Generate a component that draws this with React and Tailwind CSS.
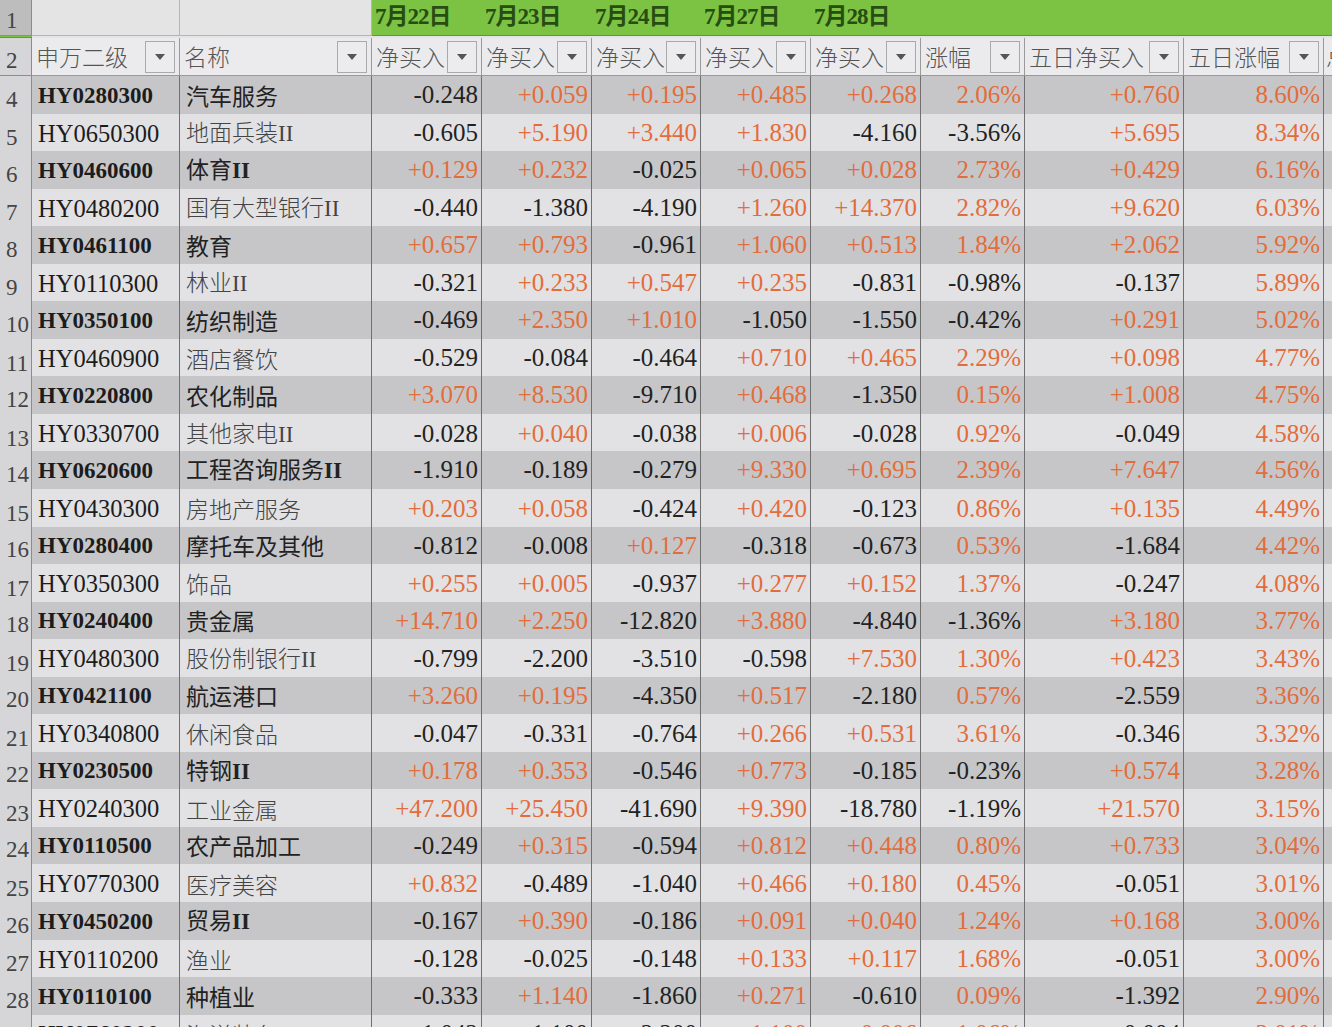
import React from 'react';

const rows = [
  ['HY0280300', '汽车服务', '-0.248', '+0.059', '+0.195', '+0.485', '+0.268', '2.06%', '+0.760', '8.60%'],
  ['HY0650300', '地面兵装II', '-0.605', '+5.190', '+3.440', '+1.830', '-4.160', '-3.56%', '+5.695', '8.34%'],
  ['HY0460600', '体育II', '+0.129', '+0.232', '-0.025', '+0.065', '+0.028', '2.73%', '+0.429', '6.16%'],
  ['HY0480200', '国有大型银行II', '-0.440', '-1.380', '-4.190', '+1.260', '+14.370', '2.82%', '+9.620', '6.03%'],
  ['HY0461100', '教育', '+0.657', '+0.793', '-0.961', '+1.060', '+0.513', '1.84%', '+2.062', '5.92%'],
  ['HY0110300', '林业II', '-0.321', '+0.233', '+0.547', '+0.235', '-0.831', '-0.98%', '-0.137', '5.89%'],
  ['HY0350100', '纺织制造', '-0.469', '+2.350', '+1.010', '-1.050', '-1.550', '-0.42%', '+0.291', '5.02%'],
  ['HY0460900', '酒店餐饮', '-0.529', '-0.084', '-0.464', '+0.710', '+0.465', '2.29%', '+0.098', '4.77%'],
  ['HY0220800', '农化制品', '+3.070', '+8.530', '-9.710', '+0.468', '-1.350', '0.15%', '+1.008', '4.75%'],
  ['HY0330700', '其他家电II', '-0.028', '+0.040', '-0.038', '+0.006', '-0.028', '0.92%', '-0.049', '4.58%'],
  ['HY0620600', '工程咨询服务II', '-1.910', '-0.189', '-0.279', '+9.330', '+0.695', '2.39%', '+7.647', '4.56%'],
  ['HY0430300', '房地产服务', '+0.203', '+0.058', '-0.424', '+0.420', '-0.123', '0.86%', '+0.135', '4.49%'],
  ['HY0280400', '摩托车及其他', '-0.812', '-0.008', '+0.127', '-0.318', '-0.673', '0.53%', '-1.684', '4.42%'],
  ['HY0350300', '饰品', '+0.255', '+0.005', '-0.937', '+0.277', '+0.152', '1.37%', '-0.247', '4.08%'],
  ['HY0240400', '贵金属', '+14.710', '+2.250', '-12.820', '+3.880', '-4.840', '-1.36%', '+3.180', '3.77%'],
  ['HY0480300', '股份制银行II', '-0.799', '-2.200', '-3.510', '-0.598', '+7.530', '1.30%', '+0.423', '3.43%'],
  ['HY0421100', '航运港口', '+3.260', '+0.195', '-4.350', '+0.517', '-2.180', '0.57%', '-2.559', '3.36%'],
  ['HY0340800', '休闲食品', '-0.047', '-0.331', '-0.764', '+0.266', '+0.531', '3.61%', '-0.346', '3.32%'],
  ['HY0230500', '特钢II', '+0.178', '+0.353', '-0.546', '+0.773', '-0.185', '-0.23%', '+0.574', '3.28%'],
  ['HY0240300', '工业金属', '+47.200', '+25.450', '-41.690', '+9.390', '-18.780', '-1.19%', '+21.570', '3.15%'],
  ['HY0110500', '农产品加工', '-0.249', '+0.315', '-0.594', '+0.812', '+0.448', '0.80%', '+0.733', '3.04%'],
  ['HY0770300', '医疗美容', '+0.832', '-0.489', '-1.040', '+0.466', '+0.180', '0.45%', '-0.051', '3.01%'],
  ['HY0450200', '贸易II', '-0.167', '+0.390', '-0.186', '+0.091', '+0.040', '1.24%', '+0.168', '3.00%'],
  ['HY0110200', '渔业', '-0.128', '-0.025', '-0.148', '+0.133', '+0.117', '1.68%', '-0.051', '3.00%'],
  ['HY0110100', '种植业', '-0.333', '+1.140', '-1.860', '+0.271', '-0.610', '0.09%', '-1.392', '2.90%'],
  ['HY0760200', '海洋装备', '-1.042', '-1.100', '-2.200', '+1.100', '+0.006', '1.06%', '-0.004', '3.01%'],
];

const headers = ['申万二级', '名称', '净买入', '净买入', '净买入', '净买入', '净买入', '涨幅', '五日净买入', '五日涨幅'];
const dates = ['7月22日', '7月23日', '7月24日', '7月27日', '7月28日'];

const grid = 'grid grid-cols-[32px_148px_192px_110px_110px_109px_110px_110px_104px_159px_140px_1fr]';
const serif = "font-['Liberation_Serif','Noto_Sans_CJK_SC',serif]";
const cjk = "font-['Noto_Sans_CJK_SC','Noto_Sans',sans-serif]";

function isRed(v) {
  return !v.startsWith('-');
}

function Dropdown() {
  return (
    <div className="w-[30px] h-[32px] border border-[#a9a9a9] bg-[#ececee] flex items-center justify-center shrink-0">
      <svg width="10" height="6" viewBox="0 0 10 6">
        <polygon points="0,0 10,0 5,6" fill="#555" />
      </svg>
    </div>
  );
}

function RowNum({ n, dark }) {
  return (
    <div className={`${serif} border-r border-b border-[#8c8c8c] ${dark ? 'bg-[#bdbdbd]' : 'bg-[#d6d6d8]'} text-[#444] text-[23px] leading-none pl-[6px] flex items-end pb-[3px]`}>
      {n}
    </div>
  );
}

export default function App() {
  return (
    <div className="w-[1332px] h-[1027px] overflow-hidden bg-[#e4e4e6]">
      {/* row 1: date banner */}
      <div className={`${grid} h-[38px]`}>
        <RowNum n="1" dark />
        <div className="bg-[#e4e4e4] border-r border-b border-[#b5b5b5]" />
        <div className="bg-[#e4e4e4] border-r border-b border-[#b5b5b5]" />
        {dates.map((d) => (
          <div key={d} className="bg-[#7cc243] border-b border-[#5f9a2f] flex items-center pl-[3px]">
            <span className={`${serif} font-bold text-[23px] text-[#274d12] tracking-[-1px] whitespace-nowrap`}>{d}</span>
          </div>
        ))}
        {[0, 1, 2, 3, 4].map((i) => (
          <div key={i} className="bg-[#7cc243] border-b border-[#5f9a2f]" />
        ))}
      </div>

      {/* row 2: filter headers */}
      <div className={`${grid} h-[38px]`}>
        <RowNum n="2" />
        {headers.map((h, i) => (
          <div key={i} className="bg-[#ebebed] border-r border-b border-[#9a9a9a] flex items-center justify-between pl-[4px] pr-[4px] overflow-hidden">
            <span className={`${cjk} text-[23px] font-light text-[#555] whitespace-nowrap`}>{h}</span>
            <Dropdown />
          </div>
        ))}
        <div className="bg-[#ebebed] border-b border-[#9a9a9a] flex items-center pl-[2px]">
          <span className={`${cjk} text-[23px] font-light text-[#555]`}>总</span>
        </div>
      </div>

      {/* data rows */}
      {rows.map((r, idx) => {
        const gray = idx % 2 === 0;
        const bg = gray ? 'bg-[#c6c6c8]' : 'bg-[#e2e2e4]';
        return (
          <div key={r[0]} className={`${grid} h-[37.56px]`}>
            <RowNum n={idx + 4} />
            <div className={`${bg} border-r border-b border-[#6f6f6f] flex items-center pl-[6px] pt-[2px]`}>
              <span className={`${serif} ${gray ? 'font-bold text-[23px]' : 'text-[24.5px]'} text-[#1c1c1c]`}>{r[0]}</span>
            </div>
            <div className={`${bg} border-r border-b border-[#6f6f6f] flex items-center pl-[6px]`}>
              <span className={`${cjk} text-[23px] whitespace-nowrap ${gray ? 'text-[#222] font-normal' : 'text-[#444] font-light'}`}>
                {r[1].replace(/II$/, '')}
                {r[1].endsWith('II') && <span className={`${serif} ${gray ? 'font-bold' : ''}`}>II</span>}
              </span>
            </div>
            {r.slice(2).map((v, j) => (
              <div key={j} className={`${bg} border-r border-b border-[#6f6f6f] flex items-center justify-end pr-[3px]`}>
                <span className={`${serif} text-[25px] ${isRed(v) ? 'text-[#e26d3c]' : 'text-[#222]'}`}>{v}</span>
              </div>
            ))}
            <div className={`${bg} border-b border-[#6f6f6f]`} />
          </div>
        );
      })}
    </div>
  );
}
